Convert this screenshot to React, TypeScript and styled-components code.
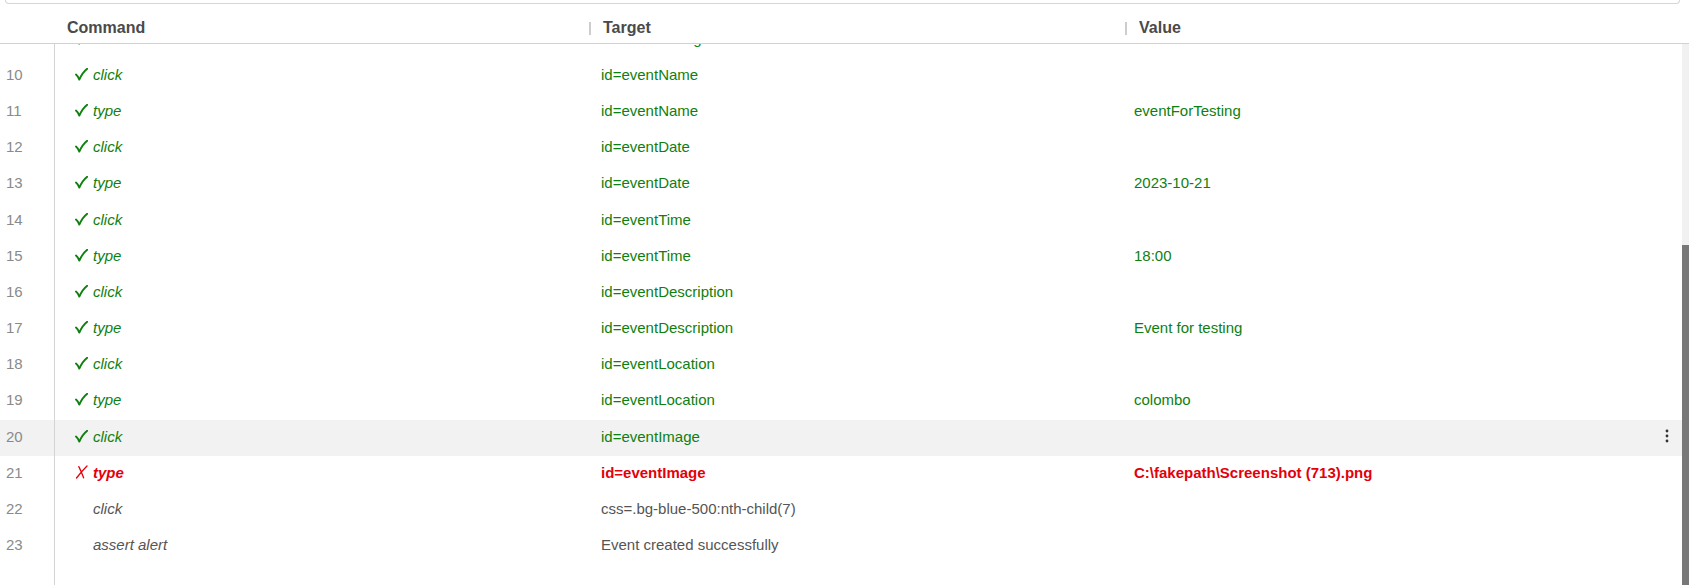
import React, { useLayoutEffect, useRef, useState } from "react";
import styled, { createGlobalStyle, css } from "styled-components";

const GlobalStyle = createGlobalStyle`
  html, body, #root {
    margin: 0;
    padding: 0;
    height: 100%;
  }
  body {
    overflow: hidden;
    background: #ffffff;
    font-family: "Liberation Sans", Arial, sans-serif;
  }
`;

type Status = "ok" | "fail" | "none";

interface Step {
  n: number;
  command: string;
  target: string;
  value: string;
  status: Status;
}

const steps: Step[] = [
  { n: 1, command: "open", target: "/", value: "", status: "ok" },
  { n: 2, command: "setWindowSize", target: "1552x832", value: "", status: "ok" },
  { n: 3, command: "click", target: "linkText=Login", value: "", status: "ok" },
  { n: 4, command: "type", target: "id=email", value: "admin@gmail.com", status: "ok" },
  { n: 5, command: "type", target: "id=password", value: "admin123", status: "ok" },
  { n: 6, command: "click", target: "css=.bg-blue-500", value: "", status: "ok" },
  { n: 7, command: "click", target: "linkText=Events", value: "", status: "ok" },
  { n: 8, command: "click", target: "css=.px-4:nth-child(2)", value: "", status: "ok" },
  { n: 9, command: "click", target: "id=eventListing", value: "", status: "ok" },
  { n: 10, command: "click", target: "id=eventName", value: "", status: "ok" },
  { n: 11, command: "type", target: "id=eventName", value: "eventForTesting", status: "ok" },
  { n: 12, command: "click", target: "id=eventDate", value: "", status: "ok" },
  { n: 13, command: "type", target: "id=eventDate", value: "2023-10-21", status: "ok" },
  { n: 14, command: "click", target: "id=eventTime", value: "", status: "ok" },
  { n: 15, command: "type", target: "id=eventTime", value: "18:00", status: "ok" },
  { n: 16, command: "click", target: "id=eventDescription", value: "", status: "ok" },
  { n: 17, command: "type", target: "id=eventDescription", value: "Event for testing", status: "ok" },
  { n: 18, command: "click", target: "id=eventLocation", value: "", status: "ok" },
  { n: 19, command: "type", target: "id=eventLocation", value: "colombo", status: "ok" },
  { n: 20, command: "click", target: "id=eventImage", value: "", status: "ok" },
  { n: 21, command: "type", target: "id=eventImage", value: "C:\\fakepath\\Screenshot (713).png", status: "fail" },
  { n: 22, command: "click", target: "css=.bg-blue-500:nth-child(7)", value: "", status: "none" },
  { n: 23, command: "assert alert", target: "Event created successfully", value: "", status: "none" },
];

const HOVER_ROW = 20;
const GREEN = "#0f800f";
const RED = "#e3000b";

const Page = styled.div`
  height: 100%;
  display: flex;
  flex-direction: column;
`;

const TopBox = styled.div`
  flex: none;
  height: 3px;
  margin: 0 9px 0 5px;
  border: 1px solid #d6d6d6;
  border-top: none;
  border-radius: 0 0 4px 4px;
`;

const Header = styled.div`
  flex: none;
  display: grid;
  grid-template-columns: 55px 534px 536px 1fr;
  padding: 15px 0 6px;
  border-bottom: 1px solid #d2d2d2;
`;

const HeaderCell = styled.div<{ $first?: boolean }>`
  display: flex;
  align-items: center;
  gap: 12px;
  padding-left: ${(p) => (p.$first ? "12px" : "0")};
  font-size: 16px;
  line-height: 18px;
  font-weight: 700;
  color: #4a4a4a;
`;

const Divider = styled.span`
  width: 2px;
  height: 13px;
  background: #cdcdcd;
`;

const Body = styled.div`
  flex: 1;
  min-height: 0;
  display: flex;
`;

const Viewport = styled.div`
  flex: 1;
  min-width: 0;
  overflow: hidden;
`;

const ScrollTrack = styled.div`
  flex: none;
  width: 7px;
  background: #f1f1f1;
  display: flex;
  flex-direction: column;
  justify-content: flex-end;
`;

const ScrollThumb = styled.div`
  background: #787878;
`;

const List = styled.div`
  padding-bottom: 21px;
  background: linear-gradient(#d4d4d4, #d4d4d4) 54px 0 / 1px 100% no-repeat;
`;

const Row = styled.div<{ $hover?: boolean }>`
  box-sizing: border-box;
  display: grid;
  grid-template-columns: 55px 546px 533px 1fr 30px;
  align-items: center;
  height: 36.2px;
  padding-bottom: 3px;
  background: ${(p) => (p.$hover ? "#f2f2f2" : "transparent")};
`;

const NumCell = styled.div`
  align-self: stretch;
  display: flex;
  align-items: center;
  margin-bottom: -3px;
  padding: 0 0 3px 6px;
  border-right: 1px solid #d4d4d4;
  font-size: 15px;
  color: #8a8a8a;
`;

const statusText = (s: Status) => {
  if (s === "ok")
    return css`
      color: ${GREEN};
    `;
  if (s === "fail")
    return css`
      color: ${RED};
      font-weight: 700;
    `;
  return css`
    color: #555555;
  `;
};

const CommandCell = styled.div<{ $status: Status }>`
  display: flex;
  align-items: center;
  padding-left: 20px;
  font-size: 15px;
  font-style: italic;
  white-space: nowrap;
  ${(p) => statusText(p.$status)}
`;

const IconSlot = styled.span`
  display: inline-flex;
  align-items: center;
  width: 18px;
  height: 14px;
  flex: none;
`;

const TextCell = styled.div<{ $status: Status }>`
  font-size: 15px;
  white-space: nowrap;
  overflow: hidden;
  ${(p) => statusText(p.$status)}
`;

const MenuCell = styled.div`
  display: flex;
  justify-content: center;
  align-items: center;
`;

const CheckIcon = () => (
  <svg width="13" height="13" viewBox="0 0 13 13">
    <path
      d="M1 6.6 C2.2 7.6 3.3 9.2 4.3 11.6 C6.2 7.4 8.6 3.6 12.2 0.8"
      fill="none"
      stroke={GREEN}
      strokeWidth="1.9"
      strokeLinecap="round"
      strokeLinejoin="round"
    />
  </svg>
);

const CrossIcon = () => (
  <svg width="13" height="14" viewBox="0 0 13 14">
    <path
      d="M12 1 C8.5 4.5 5 8.5 1.5 13 M3.8 1.6 C5.6 5 7.2 9 8.6 12.8"
      fill="none"
      stroke={RED}
      strokeWidth="1.3"
      strokeLinecap="round"
    />
  </svg>
);

const Kebab = () => (
  <svg width="4" height="14" viewBox="0 0 4 14">
    <circle cx="2" cy="2" r="1.4" fill="#333" />
    <circle cx="2" cy="7" r="1.4" fill="#333" />
    <circle cx="2" cy="12" r="1.4" fill="#333" />
  </svg>
);

export default function App() {
  const viewRef = useRef<HTMLDivElement>(null);
  const [thumb, setThumb] = useState(340);

  useLayoutEffect(() => {
    const el = viewRef.current;
    if (!el) return;
    el.scrollTop = el.scrollHeight;
    const h = el.clientHeight;
    setThumb(Math.round((h * h) / el.scrollHeight) - 3);
  }, []);

  return (
    <>
      <GlobalStyle />
      <Page>
        <TopBox />
        <Header>
          <span />
          <HeaderCell $first>Command</HeaderCell>
          <HeaderCell>
            <Divider />
            Target
          </HeaderCell>
          <HeaderCell>
            <Divider />
            Value
          </HeaderCell>
        </Header>
        <Body>
          <Viewport ref={viewRef}>
            <List>
              {steps.map((s) => (
                <Row key={s.n} $hover={s.n === HOVER_ROW}>
                  <NumCell>{s.n}</NumCell>
                  <CommandCell $status={s.status}>
                    <IconSlot>
                      {s.status === "ok" ? <CheckIcon /> : s.status === "fail" ? <CrossIcon /> : null}
                    </IconSlot>
                    {s.command}
                  </CommandCell>
                  <TextCell $status={s.status}>{s.target}</TextCell>
                  <TextCell $status={s.status}>{s.value}</TextCell>
                  <MenuCell>{s.n === HOVER_ROW ? <Kebab /> : null}</MenuCell>
                </Row>
              ))}
            </List>
          </Viewport>
          <ScrollTrack>
            <ScrollThumb style={{ height: thumb }} />
          </ScrollTrack>
        </Body>
      </Page>
    </>
  );
}
